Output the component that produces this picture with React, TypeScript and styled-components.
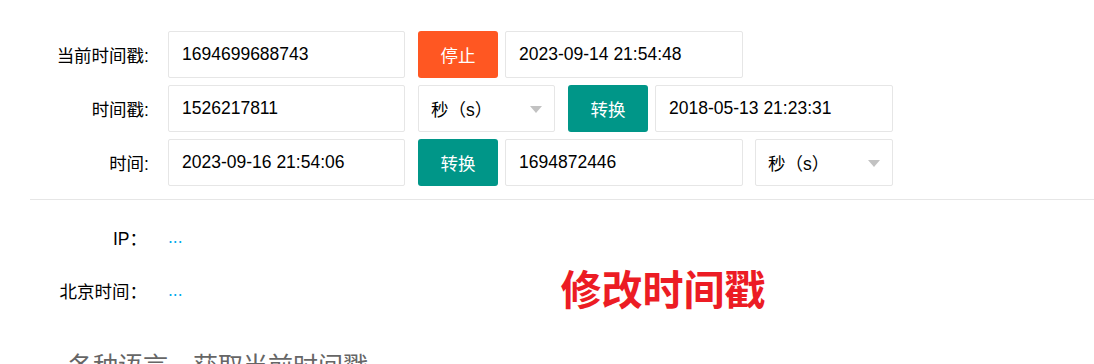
import React from "react";
import styled, { createGlobalStyle } from "styled-components";

const Global = createGlobalStyle`
  html, body { margin: 0; padding: 0; background: #fff; }
  body { font-family: "Liberation Sans", Arial, "Noto Sans CJK SC", sans-serif; color: #000; }
  * { box-sizing: border-box; }
`;

const Page = styled.div`
  width: 1094px;
  height: 364px;
  overflow: hidden;
  padding: 31px 0 0 30px;
`;

const Form = styled.div`
  display: flex;
  flex-direction: column;
  gap: 7px;
`;

const Row = styled.div`
  display: flex;
  align-items: center;
`;

const Label = styled.div`
  width: 138px;
  padding-right: 19px;
  text-align: right;
  font-size: 17.5px;
  white-space: nowrap;
`;

const Field = styled.div<{ $w: number; $ml?: number }>`
  width: ${(p) => p.$w}px;
  height: 47px;
  margin-left: ${(p) => p.$ml ?? 0}px;
  border: 1px solid #e6e6e6;
  border-radius: 2px;
  padding-left: 13px;
  display: flex;
  align-items: center;
  font-size: 17.5px;
  background: #fff;
`;

const Select = styled(Field)`
  justify-content: space-between;
  padding-right: 12px;
  padding-left: 12px;
`;

const Arrow = styled.span`
  width: 0;
  height: 0;
  border-left: 6.5px solid transparent;
  border-right: 6.5px solid transparent;
  border-top: 7px solid #c2c2c2;
  margin-top: 2px;
`;

const Button = styled.div<{ $bg: string; $ml?: number }>`
  width: 80px;
  height: 47px;
  margin-left: ${(p) => p.$ml ?? 0}px;
  background: ${(p) => p.$bg};
  color: #fff;
  border-radius: 3px;
  display: flex;
  align-items: center;
  justify-content: center;
  font-size: 17.5px;
`;

const Divider = styled.div`
  height: 1px;
  background: #e6e6e6;
  margin-top: 13px;
`;

const Info = styled.div`
  margin-top: 11px;
  display: flex;
  flex-direction: column;
`;

const InfoRow = styled.div`
  height: 53px;
  display: flex;
  align-items: center;
`;

const InfoLabel = styled.div`
  width: 120px;
  text-align: right;
  font-size: 17.5px;
  white-space: nowrap;
  margin-left: -3px;
  margin-right: 21px;
`;

const InfoValue = styled.span`
  color: #01aaed;
  font-size: 17.5px;
`;

const Annotation = styled.div`
  margin-left: 378px;
  margin-top: -8px;
  color: #ec1c24;
  font-size: 41px;
  font-weight: 700;
  font-family: "Noto Sans CJK SC", sans-serif;
  white-space: nowrap;
`;

const Heading = styled.h2`
  margin: 31px 0 0 38px;
  font-size: 25px;
  font-weight: 400;
  color: #666;
  line-height: 37px;
  white-space: nowrap;
`;

const UnitSelect = ({ w, ml }: { w: number; ml: number }) => (
  <Select $w={w} $ml={ml}>
    <span>秒（s）</span>
    <Arrow />
  </Select>
);

export default function App() {
  return (
    <Page>
      <Global />
      <Form>
        <Row>
          <Label>当前时间戳:</Label>
          <Field $w={237}>1694699688743</Field>
          <Button $bg="#ff5722" $ml={13}>停止</Button>
          <Field $w={238} $ml={7}>2023-09-14 21:54:48</Field>
        </Row>
        <Row>
          <Label>时间戳:</Label>
          <Field $w={237}>1526217811</Field>
          <UnitSelect w={137} ml={13} />
          <Button $bg="#009688" $ml={13}>转换</Button>
          <Field $w={238} $ml={7}>2018-05-13 21:23:31</Field>
        </Row>
        <Row>
          <Label>时间:</Label>
          <Field $w={237}>2023-09-16 21:54:06</Field>
          <Button $bg="#009688" $ml={13}>转换</Button>
          <Field $w={238} $ml={7}>1694872446</Field>
          <UnitSelect w={138} ml={12} />
        </Row>
      </Form>
      <Divider />
      <Info>
        <InfoRow>
          <InfoLabel>IP：</InfoLabel>
          <InfoValue>...</InfoValue>
        </InfoRow>
        <InfoRow>
          <InfoLabel>北京时间：</InfoLabel>
          <InfoValue>...</InfoValue>
          <Annotation>修改时间戳</Annotation>
        </InfoRow>
      </Info>
      <Heading>各种语言，获取当前时间戳</Heading>
    </Page>
  );
}
